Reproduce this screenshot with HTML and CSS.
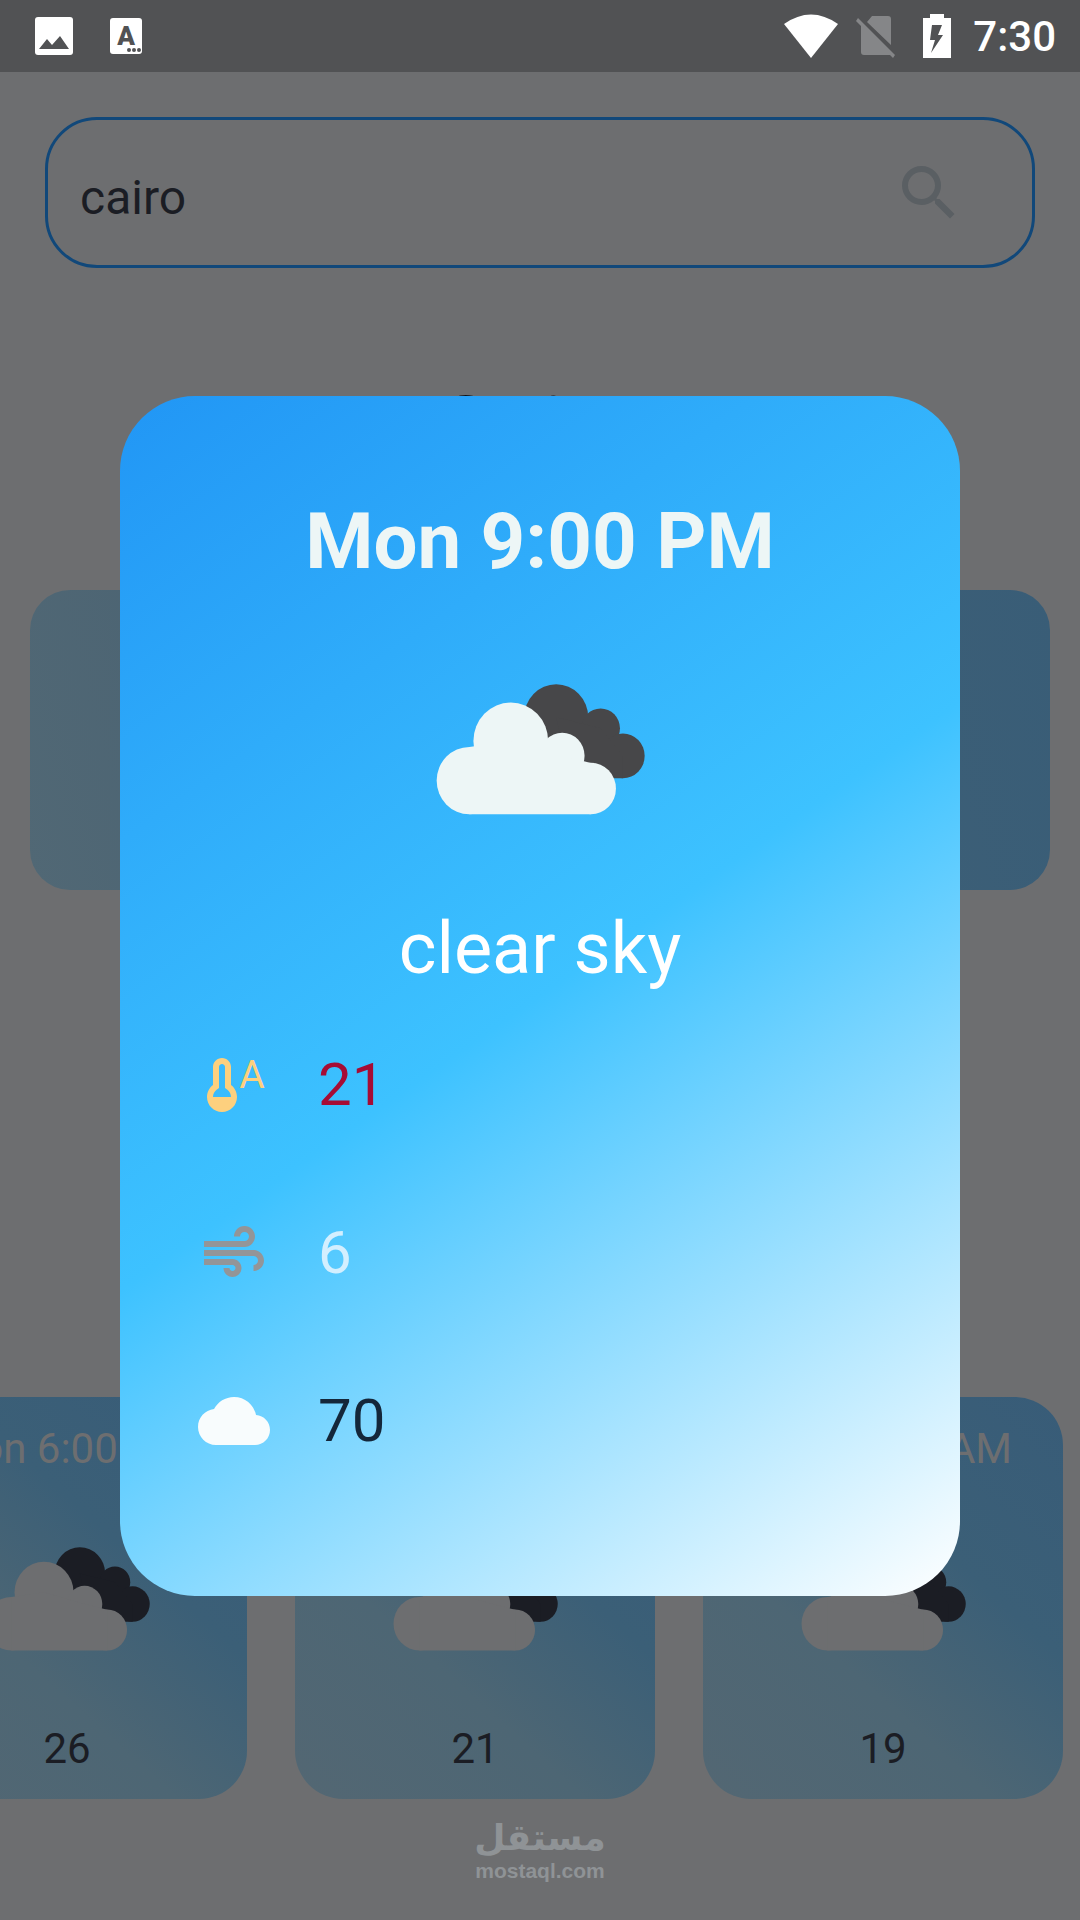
FILE: index.html
```html
<!DOCTYPE html>
<html lang="en">
<head>
  <meta charset="utf-8">
  <meta name="viewport" content="width=device-width, initial-scale=1">
  <title>Weather</title>
  <link rel="stylesheet" href="styles.css">
</head>
<body>
  <svg class="defs" aria-hidden="true">
    <symbol id="clouds" viewBox="0 0 626 381" preserveAspectRatio="none">
      <g class="cloud-back">
        <circle cx="360" cy="97" r="96"/>
        <circle cx="493" cy="129" r="58"/>
        <circle cx="560" cy="209" r="65"/>
        <path d="M360 97 493 129 560 209 560 274 400 274Z"/>
      </g>
      <g class="cloud-front">
        <circle cx="100" cy="281" r="98"/>
        <circle cx="224" cy="166" r="112"/>
        <circle cx="378" cy="209" r="67"/>
        <circle cx="464" cy="304" r="75"/>
        <path d="M100 183 224 166 378 209 464 230 464 379 100 379Z"/>
      </g>
    </symbol>
  </svg>

  <div class="screen">
    <header class="status">
      <div class="status-group notices">
        <svg width="38" height="38" viewBox="0 0 38 38" aria-hidden="true">
          <rect width="38" height="38" rx="3" fill="#fff"/>
          <path d="M4 32 12 22 17 28 25 19 34 32Z" fill="#515254"/>
        </svg>
        <svg width="32" height="36" viewBox="0 0 32 36" aria-hidden="true">
          <rect width="32" height="36" rx="3" fill="#fff"/>
          <text class="badge-letter" x="16" y="27" text-anchor="middle">A</text>
          <g fill="#515254"><circle cx="19" cy="32" r="2"/><circle cx="24" cy="32" r="2"/><circle cx="29" cy="32" r="2"/></g>
        </svg>
      </div>
      <div class="status-group">
        <svg width="54" height="44" viewBox="0 0 54 44" aria-hidden="true">
          <path d="M27 44 0 10Q27-9 54 10Z" fill="#fff"/>
        </svg>
        <svg class="no-sim" width="40" height="44" viewBox="0 0 40 44" aria-hidden="true">
          <path d="M16 2H32Q35 2 35 5V31L11 8ZM5 12 35 41 8 41Q5 41 5 38ZM2 4 39 41 37 44 0 7Z" fill="#858688"/>
        </svg>
        <svg width="28" height="44" viewBox="0 0 28 44" aria-hidden="true">
          <path d="M7 0H21V4H28V44H0V4H7Z" fill="#fff"/>
          <path d="M9 11H19L15 21H20L8 39 12 26H7Z" fill="#515254"/>
        </svg>
        <time class="clock">7:30</time>
      </div>
    </header>

    <main class="content">
      <form class="search">
        <input class="search-input" type="text" value="cairo" aria-label="City">
        <button class="search-button" type="button" aria-label="Search">
          <svg width="72" height="72" viewBox="0 0 24 24" aria-hidden="true">
            <path d="M15.5 14h-.79l-.28-.27A6.471 6.471 0 0 0 16 9.500 6.500 6.500 0 1 0 9.500 16c1.610 0 3.090-.59 4.230-1.570l.27.28v.79l5 4.990L20.490 19l-4.990-5zm-6 0C7.010 14 5 11.990 5 9.500S7.010 5 9.500 5 14 7.010 14 9.500 11.990 14 9.500 14z" fill="#5a5f63"/>
          </svg>
        </button>
      </form>

      <h1 class="city">Cairo</h1>
      <section class="today" aria-label="Today"></section>

      <ul class="forecast">
        <li class="slot">
          <span class="slot-time">Mon 6:00 PM</span>
          <svg class="slot-icon" aria-hidden="true"><use href="#clouds"/></svg>
          <span class="slot-temp">26</span>
        </li>
        <li class="slot">
          <span class="slot-time"></span>
          <svg class="slot-icon" aria-hidden="true"><use href="#clouds"/></svg>
          <span class="slot-temp">21</span>
        </li>
        <li class="slot">
          <span class="slot-time">Tue 12:00 AM</span>
          <svg class="slot-icon" aria-hidden="true"><use href="#clouds"/></svg>
          <span class="slot-temp">19</span>
        </li>
      </ul>
    </main>

    <footer class="brand">
      <span class="brand-name" lang="ar" dir="rtl">مستقل</span>
      <span class="brand-site">mostaql.com</span>
    </footer>

    <div class="overlay">
      <section class="dialog" role="dialog" aria-labelledby="dialog-title">
        <h2 class="dialog-title" id="dialog-title">Mon 9:00 PM</h2>
        <svg class="dialog-icon" aria-hidden="true"><use href="#clouds"/></svg>
        <p class="dialog-sky">clear sky</p>
        <ul class="readings">
          <li class="reading temperature">
            <svg width="72" height="72" viewBox="0 0 24 24" fill="#fdd07e" aria-hidden="true">
              <path fill-rule="evenodd" d="M11 12V6c0-1.660-1.340-3-3-3S5 4.340 5 6v6c-1.210.91-2 2.370-2 4 0 2.760 2.240 5 5 5s5-2.240 5-5c0-1.630-.79-3.090-2-4zM5 16c0-.94.45-1.840 1.200-2.400L7 13V6c0-.55.45-1 1-1s1 .45 1 1v7l.8.6c.75.57 1.200 1.460 1.200 2.400H5z"/>
              <text class="auto-letter" x="18" y="13" text-anchor="middle">A</text>
            </svg>
            <span>21</span>
          </li>
          <li class="reading wind">
            <svg width="72" height="72" viewBox="0 0 24 24" fill="#939598" aria-hidden="true">
              <path d="M14.500 17c0 1.650-1.350 3-3 3s-3-1.350-3-3h2c0 .55.45 1 1 1s1-.45 1-1-.45-1-1-1H2v-2h9.500c1.650 0 3 1.350 3 3zM19 6.500C19 4.570 17.430 3 15.500 3S12 4.570 12 6.500h2c0-.83.67-1.500 1.500-1.500s1.500.67 1.500 1.500S16.330 8 15.500 8H2v2h13.500c1.930 0 3.500-1.570 3.500-3.500zM18.500 11H2v2h16.500c.83 0 1.500.67 1.500 1.500s-.67 1.500-1.500 1.500v2c1.930 0 3.500-1.570 3.500-3.500S20.430 11 18.500 11z"/>
            </svg>
            <span>6</span>
          </li>
          <li class="reading cloudiness">
            <svg width="72" height="72" viewBox="0 0 24 24" fill="#f8fcfd" aria-hidden="true">
              <path d="M19.350 10.040C18.670 6.590 15.640 4 12 4 9.110 4 6.600 5.640 5.350 8.040 2.340 8.360 0 10.910 0 14c0 3.310 2.690 6 6 6h13c2.760 0 5-2.240 5-5 0-2.640-2.050-4.780-4.650-4.960z"/>
            </svg>
            <span>70</span>
          </li>
        </ul>
      </section>
    </div>
  </div>
</body>
</html>
```
FILE: styles.css
```css
* {
  box-sizing: border-box;
}

body {
  margin: 0;
  background: #6d6e70;
  color: #1b1d24;
  font-family: Roboto, "Noto Sans", sans-serif;
}

h1, h2, p, ul {
  margin: 0;
  padding: 0;
}

ul {
  list-style: none;
}

svg {
  display: block;
  flex: none;
}

.defs {
  position: absolute;
  width: 0;
  height: 0;
}

.cloud-back {
  fill: var(--cloud-back);
}

.cloud-front {
  fill: var(--cloud-front);
}

.screen {
  --cloud-back: #1b1d24;
  --cloud-front: #6d6e70;
  position: relative;
  display: flex;
  flex-direction: column;
  min-height: 100vh;
  overflow: hidden;
}

/* Status bar */

.status {
  display: flex;
  justify-content: space-between;
  align-items: center;
  height: 72px;
  padding: 0 24px 0 35px;
  background: #515254;
}

.status-group {
  display: flex;
  align-items: center;
  gap: 22px;
}

.notices {
  gap: 37px;
}

.no-sim {
  margin: 0 5px 0 -4px;
}

.badge-letter {
  fill: #515254;
  font-size: 26px;
  font-weight: 900;
}

.clock {
  padding-top: 2px;
  color: #fff;
  font-size: 42px;
  font-weight: 500;
  line-height: 50px;
}

/* Page behind the dialog */

.content {
  display: flex;
  flex: 1;
  flex-direction: column;
  padding-top: 45px;
}

.search {
  display: flex;
  align-items: center;
  height: 151px;
  margin: 0 45px;
  padding: 0 67px 0 32px;
  border: 3px solid #11487a;
  border-radius: 52px;
}

.search-input {
  flex: 1;
  min-width: 0;
  padding: 10px 0 0;
  border: 0;
  outline: 0;
  background: none;
  color: inherit;
  font: 48px/56px Roboto, "Noto Sans", sans-serif;
}

.search-button {
  padding: 0;
  border: 0;
  background: none;
}

.city {
  margin-top: 110px;
  color: #101217;
  font-size: 90px;
  font-weight: 400;
  line-height: 106px;
  text-align: center;
}

.today {
  min-height: 300px;
  margin: 106px 30px 48px;
  border-radius: 40px;
  background: linear-gradient(254deg, #395d77, #3f6076 40%, #4c6473 80%, #516875);
}

.forecast {
  display: flex;
  justify-content: flex-end;
  gap: 48px;
  margin-top: auto;
  padding-right: 17px;
}

.slot {
  display: flex;
  flex: none;
  flex-direction: column;
  align-items: center;
  gap: 73px;
  width: 360px;
  padding: 27px 0 25px;
  border-radius: 48px;
  background: linear-gradient(222deg, #385c78, #3b5f77 36%, #4d6674 64%, #536773);
  font-size: 42px;
  line-height: 50px;
}

.slot-time {
  min-height: 50px;
  color: #6d6e70;
}

.slot-icon {
  width: 165px;
  height: 104px;
}

/* Watermark */

.brand {
  display: flex;
  flex-direction: column;
  align-items: center;
  height: 121px;
  padding-top: 18px;
  color: #8f9396;
}

.brand-name {
  font: bold 36px/42px "DejaVu Sans", sans-serif;
}

.brand-site {
  font: bold 21px/24px "Liberation Sans", sans-serif;
}

/* Dialog */

.overlay {
  position: absolute;
  inset: 72px 0 0;
  display: flex;
  align-items: center;
  justify-content: center;
}

.dialog {
  --cloud-back: #474749;
  --cloud-front: #edf6f6;
  display: flex;
  flex-direction: column;
  align-items: center;
  width: calc(100% - 240px);
  padding: 100px 78px 91px;
  border-radius: 75px;
  background: linear-gradient(145deg, #2196f5, #3dc2ff 50%, #fff);
}

.dialog-title {
  color: #edf6f6;
  font-size: 78px;
  font-weight: 700;
  line-height: 92px;
}

.dialog-icon {
  width: 209px;
  height: 131px;
  margin: 96px 0 92px;
}

.dialog-sky {
  color: #fff;
  font-size: 72px;
  line-height: 84px;
}

.readings {
  align-self: stretch;
  margin-top: 10px;
}

.reading {
  display: flex;
  align-items: center;
  gap: 48px;
  height: 168px;
  font-size: 60px;
  line-height: 70px;
}

.auto-letter {
  font-size: 13px;
  font-weight: 400;
}

.temperature {
  color: #a60c35;
}

.wind {
  color: #d3efff;
}

.cloudiness {
  color: #14273a;
}
```
